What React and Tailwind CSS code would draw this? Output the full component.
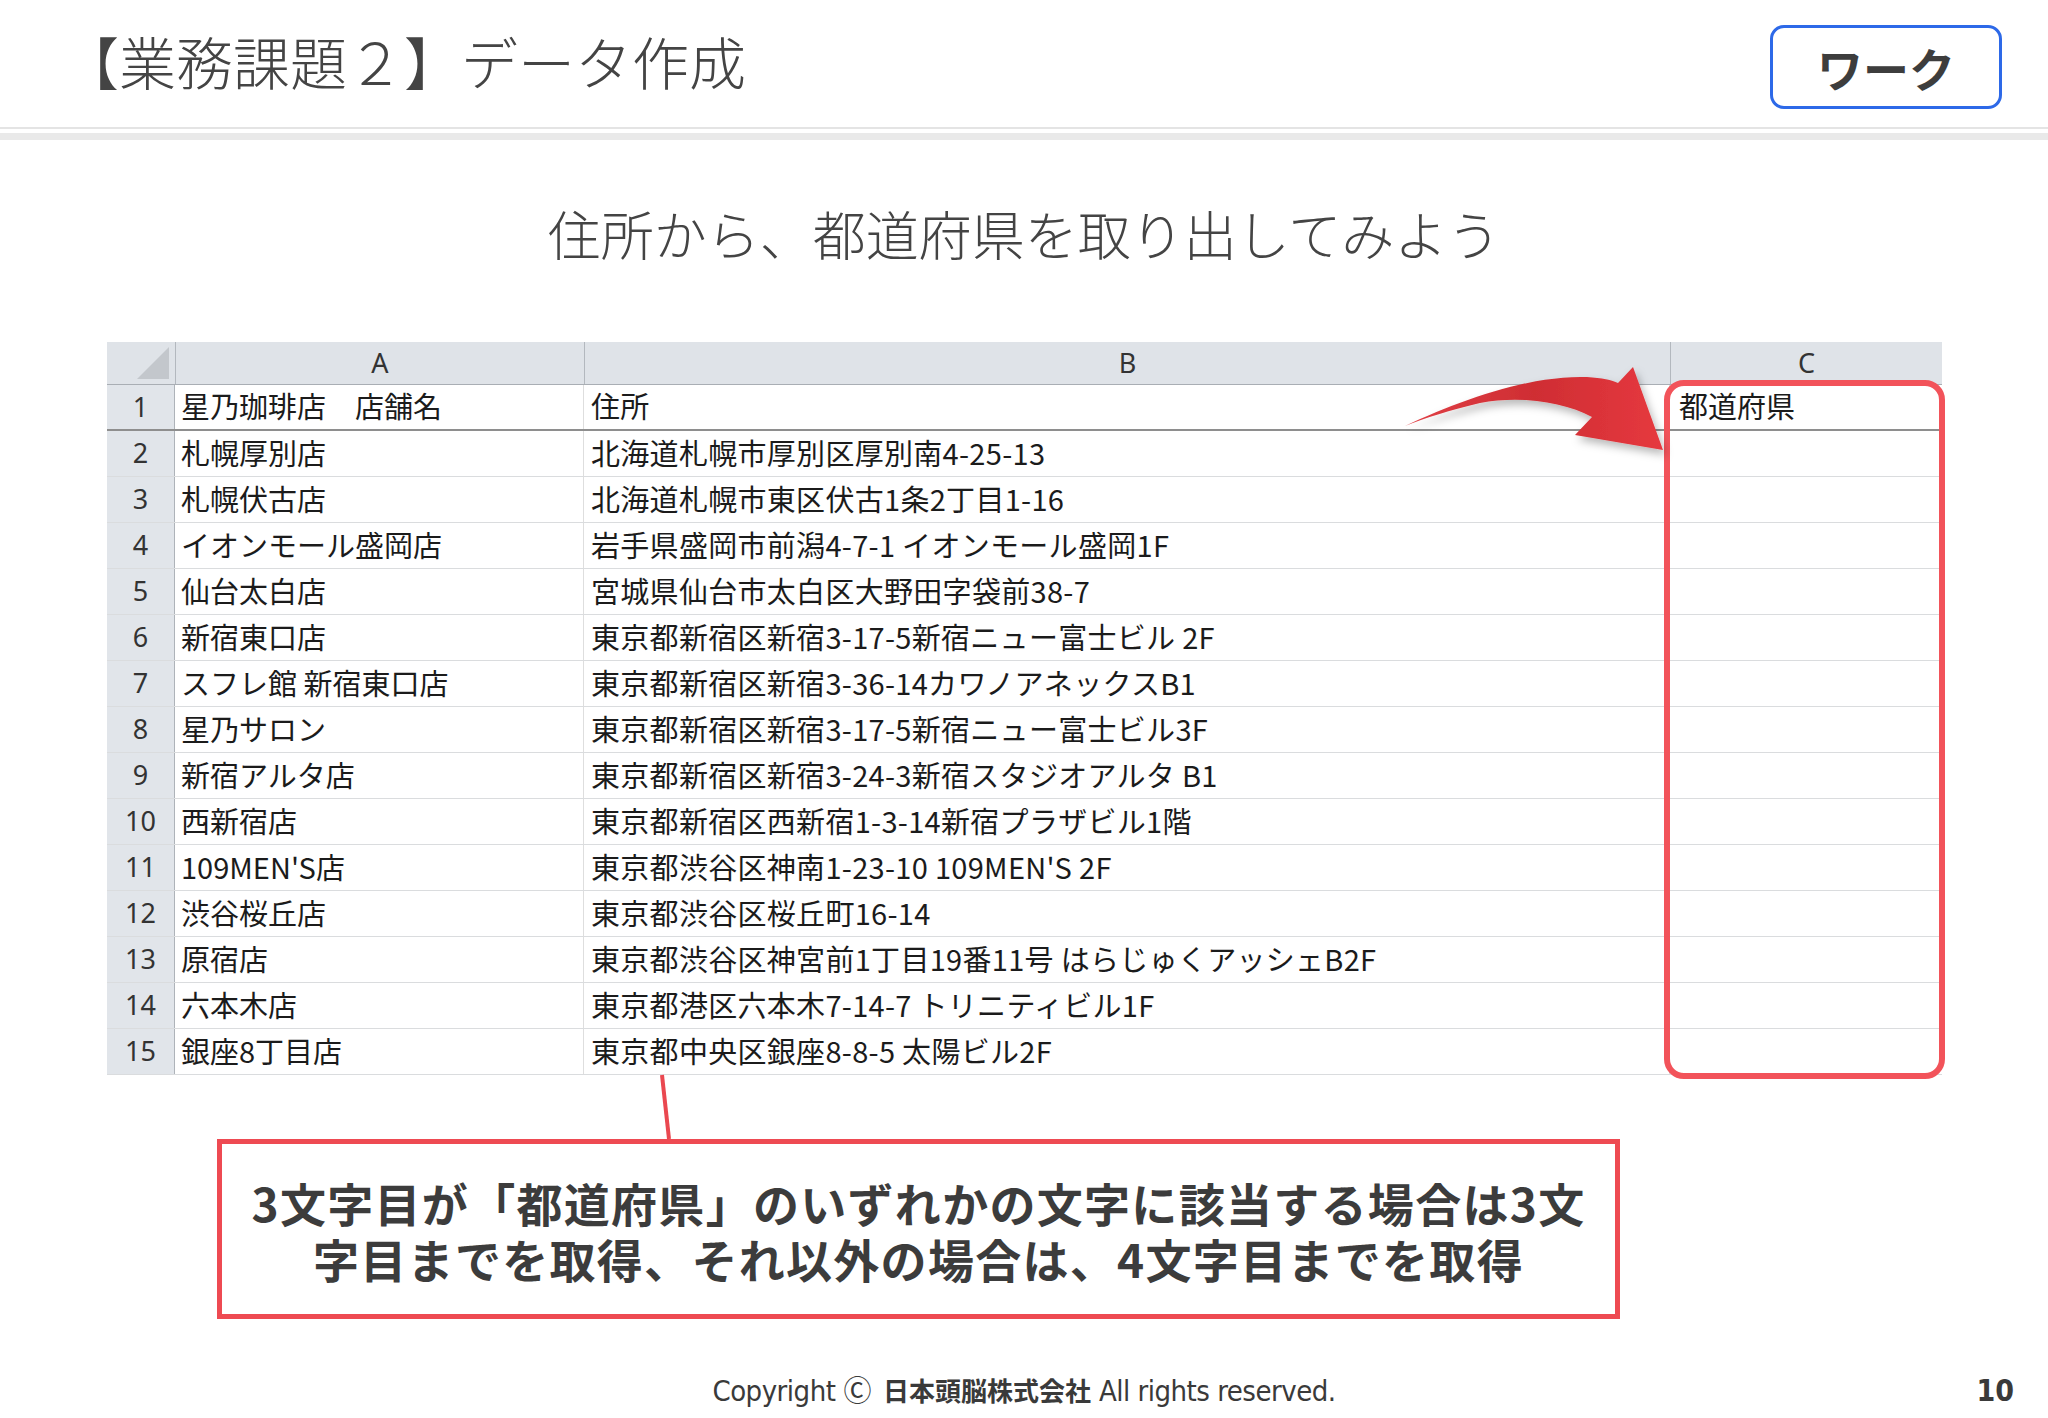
import React from "react";

const rows = [
  ["星乃珈琲店　店舗名", "住所", "都道府県"],
  ["札幌厚別店", "北海道札幌市厚別区厚別南4-25-13", ""],
  ["札幌伏古店", "北海道札幌市東区伏古1条2丁目1-16", ""],
  ["イオンモール盛岡店", "岩手県盛岡市前潟4-7-1 イオンモール盛岡1F", ""],
  ["仙台太白店", "宮城県仙台市太白区大野田字袋前38-7", ""],
  ["新宿東口店", "東京都新宿区新宿3-17-5新宿ニュー富士ビル 2F", ""],
  ["スフレ館 新宿東口店", "東京都新宿区新宿3-36-14カワノアネックスB1", ""],
  ["星乃サロン", "東京都新宿区新宿3-17-5新宿ニュー富士ビル3F", ""],
  ["新宿アルタ店", "東京都新宿区新宿3-24-3新宿スタジオアルタ B1", ""],
  ["西新宿店", "東京都新宿区西新宿1-3-14新宿プラザビル1階", ""],
  ["109MEN'S店", "東京都渋谷区神南1-23-10 109MEN'S 2F", ""],
  ["渋谷桜丘店", "東京都渋谷区桜丘町16-14", ""],
  ["原宿店", "東京都渋谷区神宮前1丁目19番11号 はらじゅくアッシェB2F", ""],
  ["六本木店", "東京都港区六本木7-14-7 トリニティビル1F", ""],
  ["銀座8丁目店", "東京都中央区銀座8-8-5 太陽ビル2F", ""],
];

function Arrow() {
  return (
    <svg
      className="absolute left-[1380px] top-[340px]"
      width="320"
      height="140"
      viewBox="0 0 320 140"
    >
      <defs>
        <linearGradient id="ag" x1="0" y1="0" x2="1" y2="0">
          <stop offset="0" stopColor="#e04046" />
          <stop offset="0.5" stopColor="#cf2d33" />
          <stop offset="1" stopColor="#e6393f" />
        </linearGradient>
        <filter id="sh" x="-20%" y="-20%" width="140%" height="160%">
          <feDropShadow dx="3" dy="5" stdDeviation="4" floodColor="#000" floodOpacity="0.28" />
        </filter>
      </defs>
      <path
        d="M25 86 C80 60 150 35 207 37 C222 38 232 40 238 43 L253 27 L283 110 L195 95 L212 77 C185 62 140 55 100 63 C70 70 45 78 25 86 Z"
        fill="url(#ag)"
        filter="url(#sh)"
      />
    </svg>
  );
}

export default function App() {
  return (
    <div className="relative w-[2048px] h-[1418px] bg-white overflow-hidden text-[#404040] font-['Noto_Sans_CJK_JP',sans-serif]">
      {/* Header */}
      <div className="h-[127px] pt-[6px] pl-[62px] pr-[46px] flex items-center justify-between">
        <div className="pb-[12px] text-[57px] font-light leading-none text-[#444]">
          【業務課題２】データ作成
        </div>
        <div className="w-[232px] h-[84px] border-[3px] border-[#2d69e8] rounded-[14px] flex items-center justify-center">
          <span className="text-[46px] font-bold leading-none text-[#3d3d3d]">ワーク</span>
        </div>
      </div>
      <div className="h-[2px] bg-[#e4e4e4]" />
      <div className="h-[4px] bg-white" />
      <div className="h-[7px] bg-[#e9e9e9]" />

      {/* Subtitle */}
      <div className="h-[202px] pb-[16px] flex items-center justify-center">
        <div className="text-[53px] font-light leading-none text-[#444]">
          住所から、都道府県を取り出してみよう
        </div>
      </div>

      {/* Table */}
      <div className="ml-[107px] w-[1835px] text-[29px] text-[#1b1b1b]">
        <div className="grid grid-cols-[68px_409px_1086px_272px] h-[43px] bg-[#dfe3e8] border-b border-[#a9aeb4] font-['Noto_Sans',sans-serif] text-[27px] text-[#333]">
          <div className="relative">
            <svg className="absolute right-[6px] bottom-[5px]" width="32" height="32" viewBox="0 0 32 32">
              <path d="M32 0 L32 32 L0 32 Z" fill="#c3c7cc" />
            </svg>
          </div>
          <div className="border-l border-[#b3b8be] flex items-center justify-center leading-none pb-[2px]">A</div>
          <div className="border-l border-[#b3b8be] flex items-center justify-center leading-none pb-[2px]">B</div>
          <div className="border-l border-[#b3b8be] flex items-center justify-center leading-none pb-[2px]">C</div>
        </div>
        {rows.map((r, i) => (
          <div
            key={i}
            className={
              i === 0
                ? "grid grid-cols-[68px_409px_1086px_272px] h-[46px] border-b-2 border-[#8e8e8e]"
                : "grid grid-cols-[68px_409px_1086px_272px] h-[46px] border-b border-[#dadcde]"
            }
          >
            <div className="bg-[#e1e5ea] border-r border-[#aeb3b9] flex items-center justify-center font-['Noto_Sans',sans-serif] text-[27px] text-[#333] leading-none pb-[2px]">
              {i + 1}
            </div>
            <div className="border-r border-[#dedede] flex items-center pl-[6px] pb-[3px] leading-none whitespace-nowrap">
              {r[0]}
            </div>
            <div className="border-r border-[#dedede] flex items-center pl-[7px] pb-[3px] leading-none whitespace-nowrap tracking-[0.3px]">
              {r[1]}
            </div>
            <div className="flex items-center pl-[9px] pb-[3px] leading-none whitespace-nowrap">{r[2]}</div>
          </div>
        ))}
      </div>

      {/* Callout */}
      <div className="mt-[64px] ml-[217px] w-[1403px] h-[180px] border-[5px] border-[#ee4a52] flex items-center justify-center pt-[2px]">
        <p className="text-center text-[46px] font-bold leading-[56px] text-[#3c3c3c] tracking-[1.3px]">
          3文字目が「都道府県」のいずれかの文字に該当する場合は3文
          <br />
          字目までを取得、それ以外の場合は、4文字目までを取得
        </p>
      </div>

      {/* Footer */}
      <div className="h-[99px] grid grid-cols-[1fr_auto_1fr] items-end pb-[12px]">
        <div />
        <div className="flex items-baseline text-[29px] leading-none text-[#3a3a3a] font-['Liberation_Sans_Narrow','DejaVu_Sans_Condensed','Liberation_Sans',sans-serif] tracking-[-0.5px]">
          <span>Copyright</span>
          <span className="ml-[8px] mr-[12px] font-['Noto_Sans_CJK_JP'] text-[28px]">Ⓒ</span>
          <span className="font-['Noto_Sans_CJK_JP'] font-bold text-[26px] tracking-[0px]">日本頭脳株式会社</span>
          <span className="ml-[8px]">All rights reserved.</span>
        </div>
        <div className="flex justify-end pr-[34px]">
          <span className="text-[30px] font-bold leading-none text-[#3a3a3a] font-['Liberation_Sans_Narrow','DejaVu_Sans_Condensed','Liberation_Sans',sans-serif]">
            10
          </span>
        </div>
      </div>

      {/* Overlays */}
      <div className="absolute left-[1664px] top-[380px] w-[281px] h-[699px] border-[6px] border-[#f2535a] rounded-[20px]" />
      <Arrow />
      <svg className="absolute left-[650px] top-[1070px]" width="30" height="72" viewBox="0 0 30 72">
        <line x1="12" y1="5" x2="19" y2="69" stroke="#ea4850" strokeWidth="4" />
      </svg>
    </div>
  );
}
